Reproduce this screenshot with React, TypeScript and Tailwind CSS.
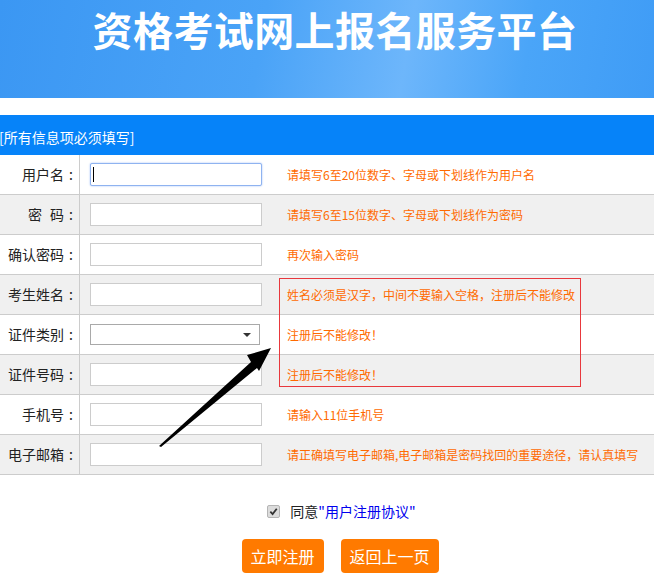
import React from 'react';

const font = { fontFamily: '"Microsoft YaHei", "Noto Sans CJK SC", "Noto Sans", sans-serif' };

type Row = { label: string; hint: string; select?: boolean; focus?: boolean };

const rows: Row[] = [
  { label: '用户名', hint: '请填写6至20位数字、字母或下划线作为用户名', focus: true },
  { label: '密码', hint: '请填写6至15位数字、字母或下划线作为密码' },
  { label: '确认密码', hint: '再次输入密码' },
  { label: '考生姓名', hint: '姓名必须是汉字，中间不要输入空格，注册后不能修改' },
  { label: '证件类别', hint: '注册后不能修改！', select: true },
  { label: '证件号码', hint: '注册后不能修改！' },
  { label: '手机号', hint: '请输入11位手机号' },
  { label: '电子邮箱', hint: '请正确填写电子邮箱,电子邮箱是密码找回的重要途径，请认真填写' },
];

function FormRow({ row, index }: { row: Row; index: number }) {
  return (
    <div className={`flex h-[40px] border-b border-[#cccccc] ${index % 2 === 1 ? 'bg-[#f0f0f0]' : 'bg-white'}`}>
      <div className="w-[80px] shrink-0 border-r border-[#cccccc] flex items-center justify-end pr-[6px] text-[14px] text-[#222]">
        {row.label === '密码' ? (
          <span className="flex gap-[8px]">
            <span>密</span>
            <span>码</span>
          </span>
        ) : (
          <span>{row.label}</span>
        )}
        <span className="w-[9px] text-right">:</span>
      </div>
      <div className="w-[199px] shrink-0 flex items-center pl-[10px]">
        {row.select ? (
          <div className="w-[170px] h-[21px] border border-[#a9a9a9] bg-white flex items-center justify-end pr-[8px]">
            <span className="w-0 h-0 border-l-[4px] border-r-[4px] border-t-[4px] border-l-transparent border-r-transparent border-t-[#333]" />
          </div>
        ) : (
          <div
            className={`w-[172px] h-[23px] bg-white flex items-center pl-[2px] ${
              row.focus ? 'border border-[#8fb3f0] rounded-[2px] shadow-[0_0_2px_#9cbcf5]' : 'border border-[#cccccc]'
            }`}
          >
            {row.focus && <span className="w-[1px] h-[15px] bg-black" />}
          </div>
        )}
      </div>
      <div className="flex items-center pl-[8px] text-[12px] text-[#ff6a00] whitespace-nowrap">{row.hint}</div>
    </div>
  );
}

export default function App() {
  return (
    <div className="relative w-[654px] h-[580px] bg-white overflow-hidden" style={font}>
      {/* header */}
      <div className="h-[98px] bg-[linear-gradient(100deg,#3b97f3_0%,#4aa3f7_40%,#6db6fb_62%,#4aa5f8_80%,#3f9cf6_100%)] flex justify-center pt-[5px] pl-[16px]">
        <h1 className="text-[40px] leading-[48px] font-bold text-white tracking-[0.4px]">资格考试网上报名服务平台</h1>
      </div>
      <div className="h-[17px]" />

      {/* notice bar */}
      <div className="h-[40px] bg-[#0683f9] flex items-center pt-[4px] text-white text-[14px] -ml-[1px]">
        [所有信息项必须填写]
      </div>

      {/* form table */}
      <div className="relative">
        {rows.map((r, i) => (
          <FormRow key={i} row={r} index={i} />
        ))}
        <div className="absolute left-[279px] top-[123px] w-[302px] h-[109px] border border-[#e8383d] pointer-events-none" />
      </div>

      {/* agreement */}
      <div className="h-[20px] flex items-center justify-center gap-[10px] mt-[26px] pl-[29px] text-[14px]">
        <span className="w-[13px] h-[13px] rounded-[2px] border border-[#b5b5b5] bg-[#dcdcdc] flex items-center justify-center">
          <svg width="9" height="9" viewBox="0 0 10 10">
            <path d="M1.5 5.2 L4 7.8 L8.6 2" fill="none" stroke="#333" strokeWidth="2" />
          </svg>
        </span>
        <span className="text-[#222]">
          同意<span className="text-[#0000ee]">"用户注册协议"</span>
        </span>
      </div>

      {/* buttons */}
      <div className="flex justify-center gap-[17px] mt-[18px] pl-[26px]">
        <button className="w-[82px] h-[34px] rounded-[4px] bg-[#ff7a00] text-white text-[16px]">立即注册</button>
        <button className="w-[98px] h-[34px] rounded-[4px] bg-[#ff7a00] text-white text-[16px]">返回上一页</button>
      </div>

      {/* annotation arrow */}
      <svg className="absolute left-0 top-0 pointer-events-none" width="654" height="580">
        <polygon points="159,446 251,362 247,355 271,348 259,371 257,368 161,447" fill="#000" />
      </svg>
    </div>
  );
}
